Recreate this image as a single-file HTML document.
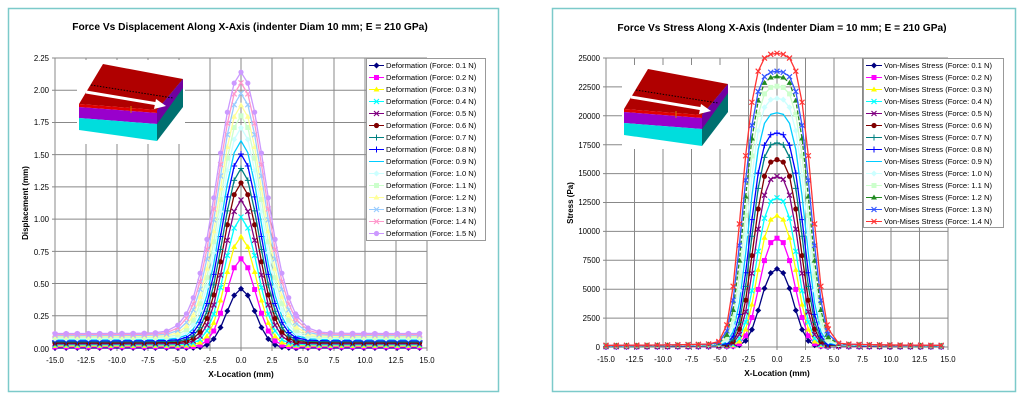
<!DOCTYPE html>
<html><head><meta charset="utf-8"><style>
html,body{margin:0;padding:0;background:#fff;width:1024px;height:400px;overflow:hidden}
svg text{font-family:"Liberation Sans",Arial,sans-serif}
</style></head><body>
<svg id="s" width="1024" height="400" xmlns="http://www.w3.org/2000/svg">
<rect x="8.5" y="8.5" width="490" height="383" fill="#fff" stroke="#7ccaca" stroke-width="1.5"/>
<rect x="552.5" y="8.5" width="463" height="383" fill="#fff" stroke="#7ccaca" stroke-width="1.5"/>
<g id="g1"></g><g id="g2"></g>
<g id="ins"></g>
<text x="250" y="30" font-size="10.2" font-weight="bold" text-anchor="middle">Force Vs Displacement Along X-Axis (indenter Diam 10 mm; E = 210 GPa)</text>
<text x="782" y="31" font-size="10.2" font-weight="bold" text-anchor="middle">Force Vs Stress Along X-Axis (Indenter Diam = 10 mm; E = 210 GPa)</text>
<text x="241" y="377" font-size="8.3" font-weight="bold" text-anchor="middle">X-Location (mm)</text>
<text x="777" y="376" font-size="8.3" font-weight="bold" text-anchor="middle">X-Location (mm)</text>
<text transform="translate(28,203) rotate(-90)" font-size="8" font-weight="bold" text-anchor="middle">Displacement (mm)</text>
<text transform="translate(573,203) rotate(-90)" font-size="8" font-weight="bold" text-anchor="middle">Stress (Pa)</text>
<g font-size="7.8" text-anchor="end">
<text x="49" y="61">2.25</text><text x="49" y="93">2.00</text><text x="49" y="125">1.75</text><text x="49" y="158">1.50</text><text x="49" y="190">1.25</text><text x="49" y="222">1.00</text><text x="49" y="255">0.75</text><text x="49" y="287">0.50</text><text x="49" y="319">0.25</text><text x="49" y="352">0.00</text>
<text x="600" y="61">25000</text><text x="600" y="90">22500</text><text x="600" y="119">20000</text><text x="600" y="148">17500</text><text x="600" y="176">15000</text><text x="600" y="205">12500</text><text x="600" y="234">10000</text><text x="600" y="263">7500</text><text x="600" y="292">5000</text><text x="600" y="321">2500</text><text x="600" y="350">0</text>
</g>
<g font-size="7.8" text-anchor="middle">
<text x="55" y="363">-15.0</text><text x="86" y="363">-12.5</text><text x="117" y="363">-10.0</text><text x="148" y="363">-7.5</text><text x="179" y="363">-5.0</text><text x="210" y="363">-2.5</text><text x="241" y="363">0.0</text><text x="272" y="363">2.5</text><text x="303" y="363">5.0</text><text x="334" y="363">7.5</text><text x="365" y="363">10.0</text><text x="396" y="363">12.5</text><text x="427" y="363">15.0</text>
<text x="606" y="362">-15.0</text><text x="634.5" y="362">-12.5</text><text x="663" y="362">-10.0</text><text x="691.5" y="362">-7.5</text><text x="720" y="362">-5.0</text><text x="748.5" y="362">-2.5</text><text x="777" y="362">0.0</text><text x="805.5" y="362">2.5</text><text x="834" y="362">5.0</text><text x="862.5" y="362">7.5</text><text x="891" y="362">10.0</text><text x="919.5" y="362">12.5</text><text x="948" y="362">15.0</text>
</g>
<rect x="366.5" y="58.5" width="119" height="182" fill="#fff" stroke="#999"/>
<rect x="863.5" y="58.5" width="140" height="169" fill="#fff" stroke="#999"/>
<g id="leg1"></g><g id="leg2"></g>
<g font-size="7.6">
<text x="386" y="68">Deformation (Force: 0.1 N)</text><text x="386" y="80">Deformation (Force: 0.2 N)</text><text x="386" y="92">Deformation (Force: 0.3 N)</text><text x="386" y="104">Deformation (Force: 0.4 N)</text><text x="386" y="116">Deformation (Force: 0.5 N)</text><text x="386" y="128">Deformation (Force: 0.6 N)</text><text x="386" y="140">Deformation (Force: 0.7 N)</text><text x="386" y="152">Deformation (Force: 0.8 N)</text><text x="386" y="164">Deformation (Force: 0.9 N)</text><text x="386" y="176">Deformation (Force: 1.0 N)</text><text x="386" y="188">Deformation (Force: 1.1 N)</text><text x="386" y="200">Deformation (Force: 1.2 N)</text><text x="386" y="212">Deformation (Force: 1.3 N)</text><text x="386" y="224">Deformation (Force: 1.4 N)</text><text x="386" y="236">Deformation (Force: 1.5 N)</text>
<text x="884" y="68">Von-Mises Stress (Force: 0.1 N)</text><text x="884" y="80">Von-Mises Stress (Force: 0.2 N)</text><text x="884" y="92">Von-Mises Stress (Force: 0.3 N)</text><text x="884" y="104">Von-Mises Stress (Force: 0.4 N)</text><text x="884" y="116">Von-Mises Stress (Force: 0.5 N)</text><text x="884" y="128">Von-Mises Stress (Force: 0.6 N)</text><text x="884" y="140">Von-Mises Stress (Force: 0.7 N)</text><text x="884" y="152">Von-Mises Stress (Force: 0.8 N)</text><text x="884" y="164">Von-Mises Stress (Force: 0.9 N)</text><text x="884" y="176">Von-Mises Stress (Force: 1.0 N)</text><text x="884" y="188">Von-Mises Stress (Force: 1.1 N)</text><text x="884" y="200">Von-Mises Stress (Force: 1.2 N)</text><text x="884" y="212">Von-Mises Stress (Force: 1.3 N)</text><text x="884" y="224">Von-Mises Stress (Force: 1.4 N)</text>
</g>
</svg>
<script>
var NS="http://www.w3.org/2000/svg";
function el(p,t,a){var e=document.createElementNS(NS,t);for(var k in a)e.setAttribute(k,a[k]);p.appendChild(e);return e;}
var C1=["#000080","#ff00ff","#ffff00","#00ffff","#800080","#800000","#008080","#0000ff","#00ccff","#ccffff","#ccffcc","#ffff99","#99ccff","#ff99cc","#cc99ff"];
var C2=["#000080","#ff00ff","#ffff00","#00ffff","#800080","#800000","#008080","#0000ff","#00ccff","#ccffff","#ccffcc","#228b22","#3355ff","#ff3333"];
var MK=["d","s","t","x","x","c","p","p","n","d","s","t","x","x","c"];
function marker(g,m,x,y,c){
 if(m=="d")el(g,"path",{d:"M"+x+" "+(y-3)+"L"+(x+3)+" "+y+"L"+x+" "+(y+3)+"L"+(x-3)+" "+y+"Z",fill:c});
 else if(m=="s")el(g,"rect",{x:x-2.5,y:y-2.5,width:5,height:5,fill:c});
 else if(m=="t")el(g,"path",{d:"M"+x+" "+(y-3)+"L"+(x+3)+" "+(y+2)+"L"+(x-3)+" "+(y+2)+"Z",fill:c});
 else if(m=="x")el(g,"path",{d:"M"+(x-2.5)+" "+(y-2.5)+"L"+(x+2.5)+" "+(y+2.5)+"M"+(x+2.5)+" "+(y-2.5)+"L"+(x-2.5)+" "+(y+2.5),stroke:c,"stroke-width":1.2});
 else if(m=="c")el(g,"circle",{cx:x,cy:y,r:2.6,fill:c});
 else if(m=="p")el(g,"path",{d:"M"+(x-3)+" "+y+"L"+(x+3)+" "+y+"M"+x+" "+(y-3)+"L"+x+" "+(y+3),stroke:c,"stroke-width":1});
}
function grid(g,x0,x1,y0,y1,ny){
 for(var i=0;i<=12;i++){var x=x0+(x1-x0)*i/12;el(g,"line",{x1:x,x2:x,y1:y0,y2:y1+3,stroke:"#888","stroke-width":1});}
 for(var j=0;j<=ny;j++){var y=y0+(y1-y0)*j/ny;el(g,"line",{x1:x0-3,x2:x1,y1:y,y2:y,stroke:"#888","stroke-width":1});}
}
var xs=[];for(var x=-15;x<-4.4;x+=0.9)xs.push(x);for(var x=-4.4;x<4.5;x+=0.55)xs.push(x);for(var x=4.5;x<=15.01;x+=0.9)xs.push(x);
var g1=document.getElementById("g1");grid(g1,55,427,58,348,9);
var pk1=[0.46,0.69,0.86,1.01,1.14,1.27,1.38,1.49,1.59,1.69,1.78,1.86,1.95,2.03,2.11];
for(var i=0;i<15;i++){
 var w=1.6+0.08*i,b=0.008*i,pts=[];
 for(var k=0;k<xs.length;k++){var x=xs[k];var v=b+(pk1[i]-b)*Math.exp(-Math.pow(Math.abs(x)/w,2))+0.03*i/14*Math.exp(-Math.abs(x)/3);pts.push([241+x*372/30,348-v*290/2.25]);}
 var g=el(g1,"g",{});el(g,"polyline",{points:pts.join(" "),fill:"none",stroke:C1[i],"stroke-width":1.3});
 pts.forEach(function(p){marker(g,MK[i],p[0],p[1],C1[i]);});
}
var g2=document.getElementById("g2");grid(g2,606,948,58,347,10);
var pk2=[6700,9300,11200,12700,14500,15900,17300,18100,19800,21000,22000,22800,23200,24700];
for(var i=0;i<14;i++){
 var w=1.85+0.12*i,pw=2.4+0.12*i,pts=[];
 for(var k=0;k<xs.length;k++){var x=xs[k];var v=pk2[i]*Math.exp(-Math.pow(Math.abs(x)/w,pw))+(60+40*i)*Math.exp(-Math.abs(x)/4)+10*i;pts.push([777+x*342/30,347-v*289/25000]);}
 var g=el(g2,"g",{});el(g,"polyline",{points:pts.join(" "),fill:"none",stroke:C2[i],"stroke-width":1.3,"stroke-dasharray":i==11?"4 2":"none"});
 pts.forEach(function(p){marker(g,MK[i],p[0],p[1],C2[i]);});
}
var l1=document.getElementById("leg1"),l2=document.getElementById("leg2");
for(var i=0;i<15;i++){var y=65.5+12*i;el(l1,"line",{x1:369,x2:384,y1:y,y2:y,stroke:C1[i]});marker(l1,MK[i],376.5,y,C1[i]);}
for(var i=0;i<14;i++){var y=65.5+12*i;el(l2,"line",{x1:866,x2:882,y1:y,y2:y,stroke:C2[i]});marker(l2,MK[i],874,y,C2[i]);}
function inset(dx,dy){
 var g=el(document.getElementById("ins"),"g",{transform:"translate("+dx+","+dy+")"});
 el(g,"rect",{x:77,y:60,width:108,height:84,fill:"#fff"});
 el(g,"path",{d:"M103 64L183 79L157 110L79 104Z",fill:"#b00000"});
 el(g,"path",{d:"M79 104L157 110L157 113L79 107Z",fill:"#e00000"});
 el(g,"path",{d:"M79 107L157 113L157 124L79 118Z",fill:"#9900cc"});
 el(g,"path",{d:"M79 118L157 124L157 141L79 130Z",fill:"#00dddd"});
 el(g,"path",{d:"M157 110L183 79L183 107L157 141Z",fill:"#007070"});
 el(g,"path",{d:"M157 110L183 79L183 88L157 124Z",fill:"#7000a0"});
 el(g,"path",{d:"M91 85L173 98",stroke:"#000","stroke-width":1,"stroke-dasharray":"1.5 1.5"});
 el(g,"path",{d:"M86 92L158 104",stroke:"#fff","stroke-width":3});
 el(g,"path",{d:"M156 99L166 106L154 109Z",fill:"#fff"});
 el(g,"path",{d:"M131 106L131 113",stroke:"#cc8800","stroke-width":1});
}
inset(0,0);inset(545,5);
</script>
</body></html>
